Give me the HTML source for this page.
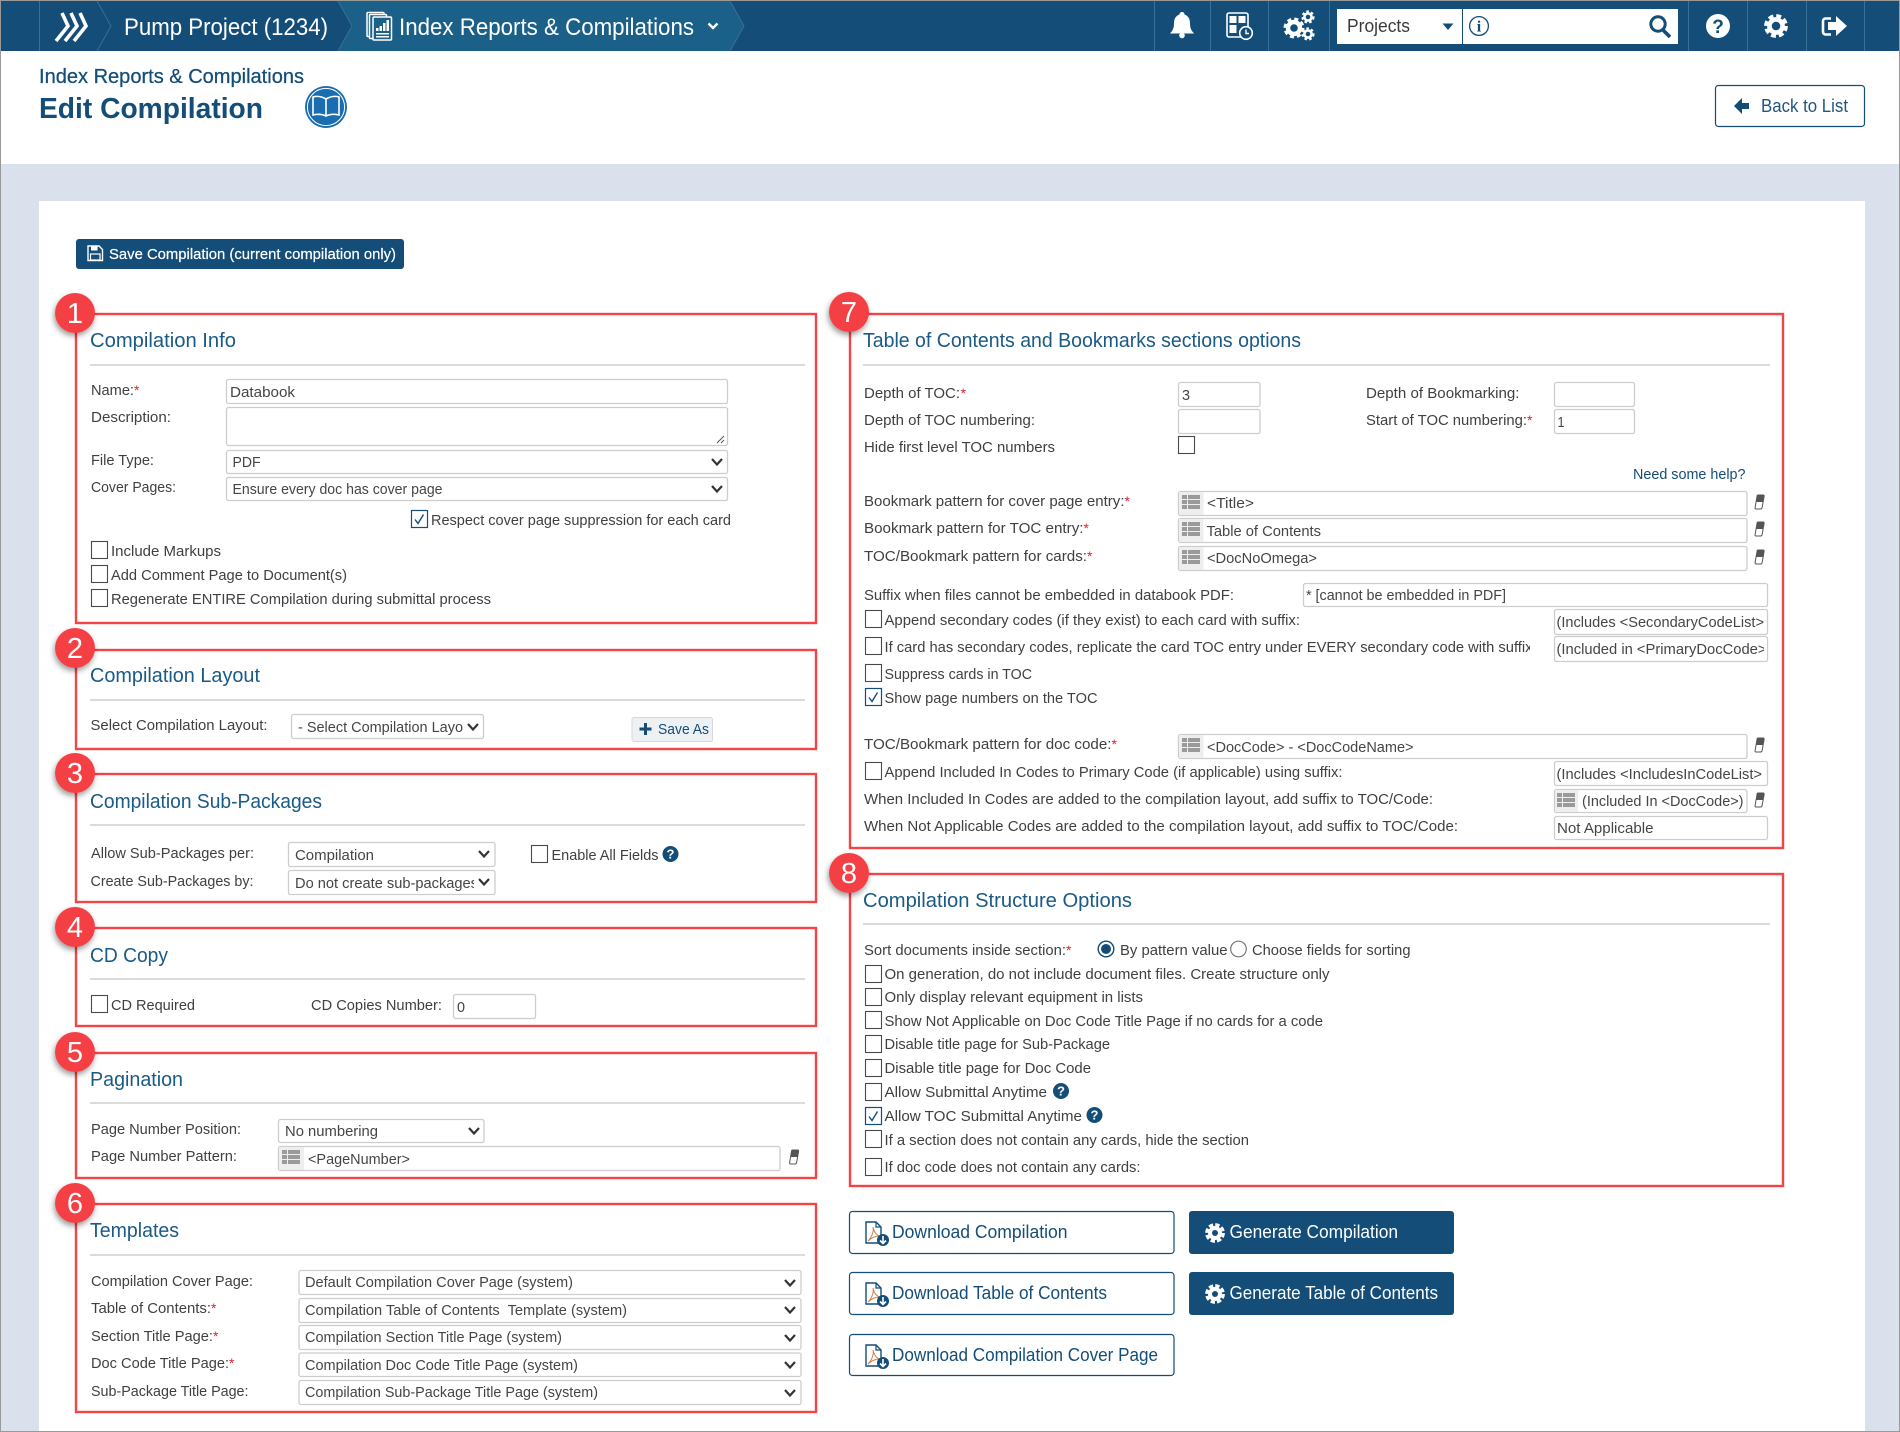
<!DOCTYPE html>
<html lang="en">
<head>
<meta charset="utf-8">
<title>Edit Compilation</title>
<style>
html,body{margin:0;padding:0;background:#fff;width:1900px;height:1432px;overflow:hidden}
svg{display:block;font-family:"Liberation Sans",sans-serif}
.l{font-size:15px;fill:#404040}
.v{font-size:15px;fill:#454545}
.t{font-size:20px;fill:#1a5a86}
.a{font-size:14px;fill:#d9232e}
.b{font-size:29px;fill:#fff;text-anchor:middle}
.box{fill:none;stroke:#f34448;stroke-width:2.4}
.hr{stroke:#cfcfcf;stroke-width:1.4}
.i{fill:#fff;stroke:#cdcdcd;stroke-width:1.3}
.ck{fill:#fff;stroke:#4a4a4a;stroke-width:1.1}
.w{fill:#fff;font-size:24px}
.n{fill:#134d78;font-size:18px}
.g{fill:#fff;font-size:18px}
</style>
</head>
<body>
<svg width="1900" height="1432" viewBox="0 0 1900 1432" xmlns="http://www.w3.org/2000/svg">
<defs>
<g id="ar"><path d="M-5,-3 L0,2.5 L5,-3" fill="none" stroke="#333" stroke-width="2.2"/></g>
<g id="er"><path d="M-1.5,-7 H3.6 Q4.8,-7 4.6,-5.6 L2.6,5.6 Q2.3,7 1.1,7 H-3.4 Q-4.6,7 -4.4,5.6 L-2.5,-5.6 Q-2.4,-7 -1.5,-7Z" fill="#fff" stroke="#555" stroke-width="1"/><path d="M-1.5,-7 H3.6 Q4.8,-7 4.6,-5.6 L3.6,0 H-3.5 L-2.5,-5.6 Q-2.4,-7 -1.5,-7Z" fill="#555"/></g>
<g id="gr" fill="#9a9a9a"><rect x="0" y="-1" width="5" height="4"/><rect x="6" y="-1" width="12" height="4"/><rect x="0" y="4" width="5" height="4"/><rect x="6" y="4" width="12" height="4"/><rect x="0" y="9" width="5" height="4"/><rect x="6" y="9" width="12" height="4"/></g>
<g id="c"><rect class="ck" x=".5" y=".5" width="16" height="17"/></g>
<g id="cc"><rect x=".5" y=".5" width="16" height="17" fill="#fff" stroke="#134d78" stroke-width="1.2"/><path d="M4,9.5 L7,13.5 L12.5,4.5" fill="none" stroke="#134d78" stroke-width="1.4"/></g>
<g id="h"><circle r="8" fill="#134d78"/><text y="4.6" text-anchor="middle" font-size="13" font-weight="bold" fill="#fff">?</text></g>
<g id="gw"><circle r="7" fill="#fff"/><circle r="8.4" fill="none" stroke="#fff" stroke-width="3" stroke-dasharray="4.4 2.2"/><circle r="3" fill="#134d78"/></g>
<g id="pdf"><path d="M1,0 H11 L16,5 V21 H1Z" fill="#fff" stroke="#134d78" stroke-width="1.4"/><path d="M11,0 V5 H16" fill="none" stroke="#134d78" stroke-width="1.2"/><path d="M3,19 C7,15 9,9 8,5 C9,10 11,13 15,14 C10,14 6,16 3,19Z" fill="none" stroke="#c9824f" stroke-width="1"/><circle cx="18" cy="18" r="6" fill="#134d78"/><path d="M18,14 V21 M15,18.5 L18,21.5 L21,18.5" fill="none" stroke="#fff" stroke-width="1.6"/></g>
<filter id="sh" x="-40%" y="-40%" width="180%" height="180%"><feDropShadow dx="-1" dy="3" stdDeviation="3" flood-color="#000" flood-opacity=".4"/></filter>
</defs>

<rect width="1900" height="1432" fill="#dbe1ec"/>
<rect x="0" y="0" width="1900" height="164" fill="#fff"/>
<rect x="39" y="201" width="1826" height="1230" fill="#fff"/>
<rect x="0" y="0" width="1900" height="1" fill="#999"/>
<rect x="0" y="0" width="1" height="1432" fill="#999"/>
<rect x="1899" y="0" width="1" height="1432" fill="#999"/>
<rect x="0" y="1431" width="1900" height="1" fill="#999"/>

<!-- top bar -->
<rect x="1" y="1" width="1898" height="50" fill="#134d78"/>
<path d="M338,1 L352,26 L338,51 H730 L744,26 L730,1Z" fill="#1a6089"/>
<g fill="none" stroke="#3a6f96" stroke-width="1"><path d="M39.5,1 V51 M97,1 L111,26 L97,51 M338,1 L352,26 L338,51 M730,1 L744,26 L730,51 M1154.5,1 V51 M1210.5,1 V51 M1268.5,1 V51 M1329.5,1 V51 M1688.5,1 V51 M1747.5,1 V51 M1806.5,1 V51 M1864.5,1 V51"/></g>
<g fill="none" stroke="#fff" stroke-width="3.6"><path d="M62,13 L68,26 L56,41"/><path d="M71,13 L77,26 L65,41"/><path d="M80,13 L86,26 L74,41"/></g>
<text x="124" y="35" class="w" textLength="204" lengthAdjust="spacingAndGlyphs">Pump Project (1234)</text>
<g fill="#1a6089" stroke="#fff" stroke-width="1.5"><rect x="367" y="12.5" width="17" height="24" rx="1"/><rect x="369.5" y="14.5" width="17" height="24" rx="1"/><rect x="373" y="17" width="18.5" height="23" rx="1"/></g>
<g fill="#fff"><rect x="376" y="28" width="2.5" height="3"/><rect x="379.5" y="26" width="2.5" height="5"/><rect x="383" y="23" width="2.5" height="8"/><rect x="386.5" y="20" width="2.5" height="11"/><rect x="376" y="33" width="13" height="1.5"/><rect x="376" y="36" width="13" height="1.5"/></g>
<text x="399" y="35" class="w" textLength="295" lengthAdjust="spacingAndGlyphs">Index Reports &amp; Compilations</text>
<path d="M708.5,23.5 L713,28 L717.5,23.5" fill="none" stroke="#fff" stroke-width="2.4"/>

<path d="M1182,12 c-1.5,0 -2.5,1 -2.5,2.5 c-4,1.5 -5.5,4.5 -5.5,9 c0,5 -1.5,7 -4,10 h24 c-2.5,-3 -4,-5 -4,-10 c0,-4.5 -1.5,-7.5 -5.5,-9 c0,-1.5 -1,-2.5 -2.5,-2.5z" fill="#fff"/><circle cx="1182" cy="35.5" r="2.8" fill="#fff"/>
<rect x="1227" y="13" width="21" height="24" rx="2" fill="none" stroke="#fff" stroke-width="1.6"/>
<g fill="#fff"><rect x="1229.5" y="16" width="7" height="7"/><rect x="1238.5" y="16" width="7" height="7"/><rect x="1229.5" y="25" width="7" height="8"/></g>
<circle cx="1246" cy="33" r="6.3" fill="#134d78" stroke="#fff" stroke-width="1.6"/><path d="M1246,29.5 V33.5 H1249" fill="none" stroke="#fff" stroke-width="1.4"/>
<g><circle cx="1294" cy="28" r="6" fill="none" stroke="#fff" stroke-width="4.4"/><circle cx="1294" cy="28" r="9" fill="none" stroke="#fff" stroke-width="3" stroke-dasharray="4 3.07"/>
<circle cx="1308" cy="17" r="3.6" fill="none" stroke="#fff" stroke-width="2.6"/><circle cx="1308" cy="17" r="5.6" fill="none" stroke="#fff" stroke-width="2" stroke-dasharray="2.6 2.3"/>
<circle cx="1308" cy="34" r="3.6" fill="none" stroke="#fff" stroke-width="2.6"/><circle cx="1308" cy="34" r="5.6" fill="none" stroke="#fff" stroke-width="2" stroke-dasharray="2.6 2.3"/></g>
<rect x="1337" y="9" width="341" height="35" fill="#fff"/>
<rect x="1462" y="9" width="1" height="35" fill="#134d78"/>
<text x="1347" y="32" font-size="18" fill="#3a3a3a" textLength="63" lengthAdjust="spacingAndGlyphs">Projects</text>
<path d="M1442.5,23.5 H1453.5 L1448,30Z" fill="#134d78"/>
<circle cx="1479" cy="26" r="9.4" fill="none" stroke="#134d78" stroke-width="1.3"/>
<text x="1479" y="31.5" text-anchor="middle" font-size="16" font-weight="bold" style="font-family:'Liberation Serif',serif" fill="#134d78">i</text>
<circle cx="1658" cy="24" r="7.2" fill="none" stroke="#134d78" stroke-width="3"/><path d="M1663,30 L1670,37" stroke="#134d78" stroke-width="3.6"/>
<circle cx="1718" cy="26" r="12" fill="#fff"/><text x="1718" y="33" text-anchor="middle" font-size="19" font-weight="bold" fill="#134d78">?</text>
<circle cx="1776" cy="26" r="6.6" fill="none" stroke="#fff" stroke-width="4.6"/><circle cx="1776" cy="26" r="10.2" fill="none" stroke="#fff" stroke-width="3.4" stroke-dasharray="5 3"/>
<path d="M1831,18.5 H1825.5 A2.5,2.5 0 0 0 1823,21 V32 A2.5,2.5 0 0 0 1825.5,34.5 H1831" fill="none" stroke="#fff" stroke-width="2.6"/>
<path d="M1828,22 H1836 V16 L1847,26 L1836,36 V30 H1828Z" fill="#fff"/>

<!-- header -->
<text x="39" y="83" font-size="20" fill="#134d78" stroke="#134d78" stroke-width=".25" textLength="265" lengthAdjust="spacingAndGlyphs">Index Reports &amp; Compilations</text>
<text x="39" y="118" font-size="29" font-weight="bold" fill="#134d78" textLength="224" lengthAdjust="spacingAndGlyphs">Edit Compilation</text>
<circle cx="326" cy="107" r="21" fill="#1a6db0"/><circle cx="326" cy="107" r="18.6" fill="none" stroke="#fff" stroke-width="1"/>
<path d="M326,99 C321,96 316,96 313,97 V115 C317,114 322,114 326,116 C330,114 335,114 339,115 V97 C336,96 331,96 326,99Z M326,99 V116" fill="#1a6db0" stroke="#fff" stroke-width="1.6"/>
<rect x="1715.5" y="85.5" width="149" height="41" rx="3" fill="#fff" stroke="#134d78" stroke-width="1.2"/>
<path d="M1734,106 L1742,98 V103 H1749 V109 H1742 V114Z" fill="#134d78"/>
<text x="1761" y="112" class="n" fill-opacity=".95" textLength="87" lengthAdjust="spacingAndGlyphs">Back to List</text>

<!-- save button -->
<rect x="76" y="239" width="328" height="30" rx="3" fill="#134d78"/>
<path d="M88,246 H99 L102.5,249.5 V260.5 H88Z" fill="none" stroke="#fff" stroke-width="1.4"/><rect x="91" y="246" width="6.5" height="4.5" fill="#fff"/><rect x="90.5" y="254" width="9.5" height="6" fill="none" stroke="#fff" stroke-width="1.2"/>
<text x="109" y="259" font-size="15" fill="#fff" stroke="#fff" stroke-width=".2" textLength="287" lengthAdjust="spacingAndGlyphs">Save Compilation (current compilation only)</text>

<!-- SECTION 1 -->
<rect class="box" x="76" y="314" width="740" height="309"/>
<text x="90" y="347" class="t" textLength="146" lengthAdjust="spacingAndGlyphs">Compilation Info</text>
<line class="hr" x1="90" x2="805" y1="365" y2="365"/>
<text x="91" y="395" class="l" textLength="43" lengthAdjust="spacingAndGlyphs">Name:</text><text x="134" y="395" class="a">*</text>
<rect class="i" x="226.5" y="379.5" width="501" height="24" rx="2"/>
<text x="230" y="397" class="v" textLength="65" lengthAdjust="spacingAndGlyphs">Databook</text>
<text x="91" y="422" class="l" textLength="80" lengthAdjust="spacingAndGlyphs">Description:</text>
<rect class="i" x="226.5" y="407.5" width="501" height="38" rx="2"/>
<path d="M717,443 L724,436 M721,443 L724,440" stroke="#555" stroke-width="1"/>
<text x="91" y="465" class="l" textLength="63" lengthAdjust="spacingAndGlyphs">File Type:</text>
<rect class="i" x="226.5" y="450.5" width="501" height="23" rx="2"/>
<text x="232.5" y="467" class="v" textLength="28" lengthAdjust="spacingAndGlyphs">PDF</text><use href="#ar" x="717" y="462"/>
<text x="91" y="492" class="l" textLength="85" lengthAdjust="spacingAndGlyphs">Cover Pages:</text>
<rect class="i" x="226.5" y="477.5" width="501" height="23" rx="2"/>
<text x="232.5" y="494" class="v" textLength="210" lengthAdjust="spacingAndGlyphs">Ensure every doc has cover page</text><use href="#ar" x="717" y="489"/>
<use href="#cc" x="411" y="510"/>
<text x="431" y="525" class="l" textLength="300" lengthAdjust="spacingAndGlyphs">Respect cover page suppression for each card</text>
<use href="#c" x="91" y="541"/><text x="111" y="556" class="l" textLength="110" lengthAdjust="spacingAndGlyphs">Include Markups</text>
<use href="#c" x="91" y="565"/><text x="111" y="580" class="l" textLength="236" lengthAdjust="spacingAndGlyphs">Add Comment Page to Document(s)</text>
<use href="#c" x="91" y="589"/><text x="111" y="604" class="l" textLength="380" lengthAdjust="spacingAndGlyphs">Regenerate ENTIRE Compilation during submittal process</text>

<!-- SECTION 2 -->
<rect class="box" x="76" y="650" width="740" height="99"/>
<text x="90" y="682" class="t" textLength="170" lengthAdjust="spacingAndGlyphs">Compilation Layout</text>
<line class="hr" x1="90" x2="805" y1="700" y2="700"/>
<text x="90.5" y="730" class="l" textLength="177" lengthAdjust="spacingAndGlyphs">Select Compilation Layout:</text>
<rect class="i" x="291.5" y="714.5" width="192" height="24" rx="2"/>
<text x="298" y="732" class="v" textLength="165" lengthAdjust="spacingAndGlyphs">- Select Compilation Layo</text><use href="#ar" x="473" y="727"/>
<rect x="632" y="717.5" width="80.5" height="24" rx="2" fill="#eef1f4" stroke="#d5d9de"/>
<path d="M645.5,723 V735 M639.5,729 H651.5" stroke="#134d78" stroke-width="3"/>
<text x="658" y="734" font-size="15" fill="#134d78" textLength="51" lengthAdjust="spacingAndGlyphs">Save As</text>

<!-- SECTION 3 -->
<rect class="box" x="76" y="774" width="740" height="128"/>
<text x="90" y="808" class="t" textLength="232" lengthAdjust="spacingAndGlyphs">Compilation Sub-Packages</text>
<line class="hr" x1="90" x2="805" y1="825" y2="825"/>
<text x="91" y="858" class="l" textLength="163" lengthAdjust="spacingAndGlyphs">Allow Sub-Packages per:</text>
<rect class="i" x="288.5" y="842.5" width="206.5" height="24" rx="2"/>
<text x="295" y="860" class="v" textLength="79" lengthAdjust="spacingAndGlyphs">Compilation</text><use href="#ar" x="484" y="854"/>
<text x="90.5" y="886" class="l" textLength="163" lengthAdjust="spacingAndGlyphs">Create Sub-Packages by:</text>
<rect class="i" x="288.5" y="870.5" width="206.5" height="24" rx="2"/>
<text x="295" y="888" class="v" textLength="183" lengthAdjust="spacingAndGlyphs">Do not create sub-packages</text><rect x="474" y="872" width="20" height="21" fill="#fff"/><use href="#ar" x="484" y="882"/>
<use href="#c" x="531" y="845"/><text x="551.5" y="860" class="l" textLength="107" lengthAdjust="spacingAndGlyphs">Enable All Fields</text><use href="#h" x="670.5" y="854"/>

<!-- SECTION 4 -->
<rect class="box" x="76" y="928" width="740" height="98"/>
<text x="90" y="962" class="t" textLength="78" lengthAdjust="spacingAndGlyphs">CD Copy</text>
<line class="hr" x1="90" x2="805" y1="979" y2="979"/>
<use href="#c" x="91" y="995"/><text x="111" y="1010" class="l" textLength="84" lengthAdjust="spacingAndGlyphs">CD Required</text>
<text x="311" y="1010" class="l" textLength="131" lengthAdjust="spacingAndGlyphs">CD Copies Number:</text>
<rect class="i" x="453.5" y="994.5" width="82" height="24" rx="2"/>
<text x="457" y="1012" class="v" textLength="8" lengthAdjust="spacingAndGlyphs">0</text>

<!-- SECTION 5 -->
<rect class="box" x="76" y="1053" width="740" height="125"/>
<text x="90" y="1086" class="t" textLength="93" lengthAdjust="spacingAndGlyphs">Pagination</text>
<line class="hr" x1="90" x2="805" y1="1103" y2="1103"/>
<text x="91" y="1134" class="l" textLength="150" lengthAdjust="spacingAndGlyphs">Page Number Position:</text>
<rect class="i" x="278.5" y="1119.5" width="205.5" height="23" rx="2"/>
<text x="285" y="1136" class="v" textLength="93" lengthAdjust="spacingAndGlyphs">No numbering</text><use href="#ar" x="474" y="1131"/>
<text x="91" y="1161" class="l" textLength="146" lengthAdjust="spacingAndGlyphs">Page Number Pattern:</text>
<rect class="i" x="278.5" y="1146.5" width="501.5" height="24" rx="2"/>
<rect x="279" y="1147" width="25" height="23" fill="#eee"/><use href="#gr" x="282" y="1151"/>
<text x="308" y="1164" class="v" textLength="102" lengthAdjust="spacingAndGlyphs">&lt;PageNumber&gt;</text><use href="#er" x="794" y="1157"/>

<!-- SECTION 6 -->
<rect class="box" x="76" y="1204" width="740" height="208"/>
<text x="90" y="1237" class="t" textLength="89" lengthAdjust="spacingAndGlyphs">Templates</text>
<line class="hr" x1="90" x2="805" y1="1255" y2="1255"/>
<text x="91" y="1286" class="l" textLength="162" lengthAdjust="spacingAndGlyphs">Compilation Cover Page:</text>
<rect class="i" x="299" y="1270.5" width="502" height="24" rx="2"/>
<text x="305" y="1287" class="v" textLength="268" lengthAdjust="spacingAndGlyphs">Default Compilation Cover Page (system)</text><use href="#ar" x="790" y="1283"/>
<text x="91" y="1313" class="l" textLength="120" lengthAdjust="spacingAndGlyphs">Table of Contents:</text><text x="211" y="1313" class="a">*</text>
<rect class="i" x="299" y="1298.5" width="502" height="24" rx="2"/>
<text x="305" y="1315" class="v" xml:space="preserve" textLength="322" lengthAdjust="spacingAndGlyphs">Compilation Table of Contents  Template (system)</text><use href="#ar" x="790" y="1310"/>
<text x="91" y="1341" class="l" textLength="122" lengthAdjust="spacingAndGlyphs">Section Title Page:</text><text x="213" y="1341" class="a">*</text>
<rect class="i" x="299" y="1325.5" width="502" height="24" rx="2"/>
<text x="305" y="1342" class="v" textLength="257" lengthAdjust="spacingAndGlyphs">Compilation Section Title Page (system)</text><use href="#ar" x="790" y="1338"/>
<text x="91" y="1368" class="l" textLength="138" lengthAdjust="spacingAndGlyphs">Doc Code Title Page:</text><text x="229" y="1368" class="a">*</text>
<rect class="i" x="299" y="1353" width="502" height="23.5" rx="2"/>
<text x="305" y="1370" class="v" textLength="273" lengthAdjust="spacingAndGlyphs">Compilation Doc Code Title Page (system)</text><use href="#ar" x="790" y="1365"/>
<text x="91" y="1396" class="l" textLength="157.5" lengthAdjust="spacingAndGlyphs">Sub-Package Title Page:</text>
<rect class="i" x="299" y="1380.5" width="502" height="24" rx="2"/>
<text x="305" y="1397" class="v" textLength="293" lengthAdjust="spacingAndGlyphs">Compilation Sub-Package Title Page (system)</text><use href="#ar" x="790" y="1393"/>

<!-- SECTION 7 -->
<rect class="box" x="850" y="314" width="933" height="534"/>
<text x="863" y="347" class="t" textLength="438" lengthAdjust="spacingAndGlyphs">Table of Contents and Bookmarks sections options</text>
<line class="hr" x1="863" x2="1770" y1="365" y2="365"/>
<text x="864" y="398" class="l" textLength="96" lengthAdjust="spacingAndGlyphs">Depth of TOC:</text><text x="960.5" y="398" class="a">*</text>
<rect class="i" x="1178.5" y="382.5" width="81.5" height="24" rx="2"/><text x="1182" y="400" class="v" textLength="8" lengthAdjust="spacingAndGlyphs">3</text>
<text x="1366" y="398" class="l" textLength="153.5" lengthAdjust="spacingAndGlyphs">Depth of Bookmarking:</text>
<rect class="i" x="1554.5" y="382.5" width="80" height="24" rx="2"/>
<text x="864" y="425" class="l" textLength="171" lengthAdjust="spacingAndGlyphs">Depth of TOC numbering:</text>
<rect class="i" x="1178.5" y="409.5" width="81.5" height="24" rx="2"/>
<text x="1366" y="425" class="l" textLength="161" lengthAdjust="spacingAndGlyphs">Start of TOC numbering:</text><text x="1527" y="425" class="a">*</text>
<rect class="i" x="1554.5" y="409.5" width="80" height="24" rx="2"/><text x="1557.5" y="427" class="v" textLength="7" lengthAdjust="spacingAndGlyphs">1</text>
<text x="864" y="452" class="l" textLength="191" lengthAdjust="spacingAndGlyphs">Hide first level TOC numbers</text>
<use href="#c" x="1178" y="436"/>
<text x="1633" y="479" font-size="15" fill="#134d78" textLength="112.5" lengthAdjust="spacingAndGlyphs">Need some help?</text>

<text x="864" y="506" class="l" textLength="260.5" lengthAdjust="spacingAndGlyphs">Bookmark pattern for cover page entry:</text><text x="1124.5" y="506" class="a">*</text>
<rect class="i" x="1178.5" y="491.5" width="568.5" height="24" rx="2"/><rect x="1179" y="492" width="24.5" height="23" fill="#eee"/><use href="#gr" x="1182" y="496"/>
<text x="1207" y="508" class="v" textLength="47" lengthAdjust="spacingAndGlyphs">&lt;Title&gt;</text><use href="#er" x="1759.5" y="502"/>
<text x="864" y="533" class="l" textLength="219.5" lengthAdjust="spacingAndGlyphs">Bookmark pattern for TOC entry:</text><text x="1083.5" y="533" class="a">*</text>
<rect class="i" x="1178.5" y="518.5" width="568.5" height="24" rx="2"/><rect x="1179" y="519" width="24.5" height="23" fill="#eee"/><use href="#gr" x="1182" y="523"/>
<text x="1206.5" y="536" class="v" textLength="114.5" lengthAdjust="spacingAndGlyphs">Table of Contents</text><use href="#er" x="1759.5" y="529"/>
<text x="864" y="561" class="l" textLength="223" lengthAdjust="spacingAndGlyphs">TOC/Bookmark pattern for cards:</text><text x="1087" y="561" class="a">*</text>
<rect class="i" x="1178.5" y="546.5" width="568.5" height="24" rx="2"/><rect x="1179" y="547" width="24.5" height="23" fill="#eee"/><use href="#gr" x="1182" y="551"/>
<text x="1207" y="563" class="v" textLength="110" lengthAdjust="spacingAndGlyphs">&lt;DocNoOmega&gt;</text><use href="#er" x="1759.5" y="557"/>

<text x="864" y="600" class="l" textLength="370" lengthAdjust="spacingAndGlyphs">Suffix when files cannot be embedded in databook PDF:</text>
<rect class="i" x="1303.5" y="583.5" width="464" height="23" rx="2"/>
<text x="1306" y="600" class="v" textLength="200" lengthAdjust="spacingAndGlyphs">* [cannot be embedded in PDF]</text>

<use href="#c" x="865" y="610"/><text x="884.5" y="625" class="l" textLength="415.5" lengthAdjust="spacingAndGlyphs">Append secondary codes (if they exist) to each card with suffix:</text>
<rect class="i" x="1554.5" y="609.5" width="213" height="25" rx="2"/>
<text x="1556.5" y="627" class="v" textLength="207.5" lengthAdjust="spacingAndGlyphs">(Includes &lt;SecondaryCodeList&gt;</text>
<use href="#c" x="865" y="637"/><text x="884.5" y="652" class="l" textLength="648" lengthAdjust="spacingAndGlyphs">If card has secondary codes, replicate the card TOC entry under EVERY secondary code with suffix</text><rect x="1530" y="638" width="6" height="18" fill="#fff"/>
<rect class="i" x="1554.5" y="636.5" width="213" height="25" rx="2"/>
<text x="1556.5" y="654" class="v" textLength="210" lengthAdjust="spacingAndGlyphs">(Included in &lt;PrimaryDocCode&gt;</text><rect x="1764" y="638" width="3" height="22" fill="#fff"/>
<use href="#c" x="865" y="664"/><text x="884.5" y="679" class="l" textLength="147.5" lengthAdjust="spacingAndGlyphs">Suppress cards in TOC</text>
<use href="#cc" x="865" y="688"/><text x="884.5" y="703" class="l" textLength="213" lengthAdjust="spacingAndGlyphs">Show page numbers on the TOC</text>

<text x="864" y="749" class="l" textLength="247.5" lengthAdjust="spacingAndGlyphs">TOC/Bookmark pattern for doc code:</text><text x="1111.5" y="749" class="a">*</text>
<rect class="i" x="1178.5" y="734.5" width="568.5" height="24" rx="2"/><rect x="1179" y="735" width="24.5" height="23" fill="#eee"/><use href="#gr" x="1182" y="739"/>
<text x="1207" y="752" class="v" textLength="206.5" lengthAdjust="spacingAndGlyphs">&lt;DocCode&gt; - &lt;DocCodeName&gt;</text><use href="#er" x="1759.5" y="745"/>
<use href="#c" x="865" y="762"/><text x="884.5" y="777" class="l" textLength="458" lengthAdjust="spacingAndGlyphs">Append Included In Codes to Primary Code (if applicable) using suffix:</text>
<rect class="i" x="1554.5" y="761.5" width="213" height="24" rx="2"/>
<text x="1556.5" y="779" class="v" textLength="205.5" lengthAdjust="spacingAndGlyphs">(Includes &lt;IncludesInCodeList&gt;</text>
<text x="864" y="804" class="l" textLength="569" lengthAdjust="spacingAndGlyphs">When Included In Codes are added to the compilation layout, add suffix to TOC/Code:</text>
<rect class="i" x="1554.5" y="789.5" width="192.5" height="23" rx="2"/><rect x="1555" y="790" width="23" height="22" fill="#eee"/><use href="#gr" x="1557" y="794"/>
<text x="1582" y="806" class="v" textLength="161.5" lengthAdjust="spacingAndGlyphs">(Included In &lt;DocCode&gt;)</text><use href="#er" x="1759.5" y="800"/>
<text x="864" y="831" class="l" textLength="594" lengthAdjust="spacingAndGlyphs">When Not Applicable Codes are added to the compilation layout, add suffix to TOC/Code:</text>
<rect class="i" x="1554.5" y="816.5" width="213" height="23" rx="2"/>
<text x="1557" y="833" class="v" textLength="96.5" lengthAdjust="spacingAndGlyphs">Not Applicable</text>

<!-- SECTION 8 -->
<rect class="box" x="850" y="874" width="933" height="312"/>
<text x="863" y="907" class="t" textLength="269" lengthAdjust="spacingAndGlyphs">Compilation Structure Options</text>
<line class="hr" x1="863" x2="1770" y1="924" y2="924"/>
<text x="864" y="955" class="l" textLength="202" lengthAdjust="spacingAndGlyphs">Sort documents inside section:</text><text x="1066" y="955" class="a">*</text>
<circle cx="1106" cy="949" r="7.8" fill="#fff" stroke="#134d78" stroke-width="1.4"/><circle cx="1106" cy="949" r="5" fill="#134d78"/>
<text x="1120" y="955" class="l" textLength="107.5" lengthAdjust="spacingAndGlyphs">By pattern value</text>
<circle cx="1238.5" cy="949" r="7.8" fill="#fff" stroke="#777" stroke-width="1.2"/>
<text x="1252" y="955" class="l" textLength="158.5" lengthAdjust="spacingAndGlyphs">Choose fields for sorting</text>
<use href="#c" x="865" y="965"/><text x="884.5" y="979" class="l" textLength="445" lengthAdjust="spacingAndGlyphs">On generation, do not include document files. Create structure only</text>
<use href="#c" x="865" y="988"/><text x="884.5" y="1002" class="l" textLength="258.5" lengthAdjust="spacingAndGlyphs">Only display relevant equipment in lists</text>
<use href="#c" x="865" y="1011"/><text x="884.5" y="1026" class="l" textLength="438.5" lengthAdjust="spacingAndGlyphs">Show Not Applicable on Doc Code Title Page if no cards for a code</text>
<use href="#c" x="865" y="1035"/><text x="884.5" y="1049" class="l" textLength="225.5" lengthAdjust="spacingAndGlyphs">Disable title page for Sub-Package</text>
<use href="#c" x="865" y="1059"/><text x="884.5" y="1073" class="l" textLength="206.5" lengthAdjust="spacingAndGlyphs">Disable title page for Doc Code</text>
<use href="#c" x="865" y="1083"/><text x="884.5" y="1097" class="l" textLength="162.5" lengthAdjust="spacingAndGlyphs">Allow Submittal Anytime</text><use href="#h" x="1061" y="1091"/>
<use href="#cc" x="865" y="1107"/><text x="884.5" y="1121" class="l" textLength="197.5" lengthAdjust="spacingAndGlyphs">Allow TOC Submittal Anytime</text><use href="#h" x="1094.5" y="1115"/>
<use href="#c" x="865" y="1130"/><text x="884.5" y="1145" class="l" textLength="364.5" lengthAdjust="spacingAndGlyphs">If a section does not contain any cards, hide the section</text>
<use href="#c" x="865" y="1158"/><text x="884.5" y="1172" class="l" textLength="256" lengthAdjust="spacingAndGlyphs">If doc code does not contain any cards:</text>

<!-- buttons -->
<rect x="849.5" y="1211.5" width="324.5" height="42" rx="3" fill="#fff" stroke="#134d78" stroke-width="1.2"/>
<use href="#pdf" x="865" y="1222"/>
<text x="892" y="1238" class="n" textLength="175.5" lengthAdjust="spacingAndGlyphs">Download Compilation</text>
<rect x="1189" y="1211" width="265" height="43" rx="3" fill="#134d78"/>
<use href="#gw" x="1215" y="1233"/>
<text x="1229.5" y="1238" class="g" textLength="168.5" lengthAdjust="spacingAndGlyphs">Generate Compilation</text>
<rect x="849.5" y="1272.5" width="324.5" height="42" rx="3" fill="#fff" stroke="#134d78" stroke-width="1.2"/>
<use href="#pdf" x="865" y="1283"/>
<text x="892" y="1299" class="n" textLength="215" lengthAdjust="spacingAndGlyphs">Download Table of Contents</text>
<rect x="1189" y="1272" width="265" height="43" rx="3" fill="#134d78"/>
<use href="#gw" x="1215" y="1294"/>
<text x="1229.5" y="1299" class="g" textLength="208.5" lengthAdjust="spacingAndGlyphs">Generate Table of Contents</text>
<rect x="849.5" y="1334.5" width="324.5" height="41" rx="3" fill="#fff" stroke="#134d78" stroke-width="1.2"/>
<use href="#pdf" x="865" y="1345"/>
<text x="892" y="1361" class="n" textLength="266" lengthAdjust="spacingAndGlyphs">Download Compilation Cover Page</text>

<!-- badges -->
<g filter="url(#sh)"><circle cx="75" cy="313" r="20" fill="#f44144"/><circle cx="75" cy="648" r="20" fill="#f44144"/><circle cx="75" cy="773" r="20" fill="#f44144"/><circle cx="75" cy="927" r="20" fill="#f44144"/><circle cx="75" cy="1052" r="20" fill="#f44144"/><circle cx="75" cy="1203" r="20" fill="#f44144"/><circle cx="849" cy="312" r="20" fill="#f44144"/><circle cx="849" cy="873" r="20" fill="#f44144"/></g>
<text class="b" x="75" y="323">1</text><text class="b" x="75" y="658">2</text><text class="b" x="75" y="783">3</text><text class="b" x="75" y="937">4</text><text class="b" x="75" y="1062">5</text><text class="b" x="75" y="1213">6</text><text class="b" x="849" y="322">7</text><text class="b" x="849" y="883">8</text>
</svg>
</body>
</html>
